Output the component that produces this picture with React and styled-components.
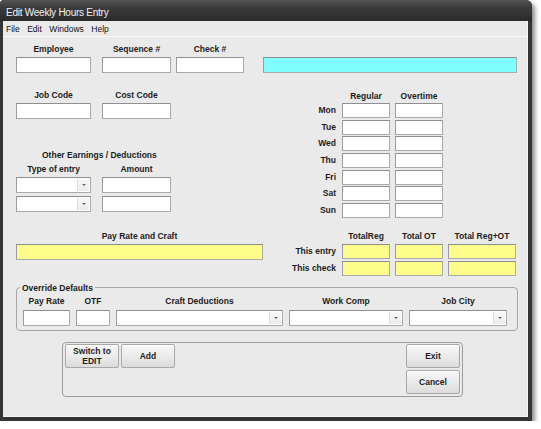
import React from "react";
import styled, { createGlobalStyle } from "styled-components";

const GlobalStyle = createGlobalStyle`
  html, body {
    margin: 0;
    padding: 0;
    background: #fff;
  }
  body {
    font-family: "Liberation Sans", Arial, sans-serif;
    color: #1c1c1c;
  }
`;

const Window = styled.div`
  width: 532px;
  height: 421px;
  display: flex;
  flex-direction: column;
  background: #353535;
  border-radius: 4px 6px 0 0;
  box-shadow: 3px 3px 4px rgba(0, 0, 0, 0.45);
`;

const TitleBar = styled.div`
  height: 21px;
  box-sizing: border-box;
  padding: 6px 0 0 6px;
  font-size: 10px;
  line-height: 13px;
  letter-spacing: -0.25px;
  color: #f2f2f2;
  background: linear-gradient(#555 0%, #3c3c3c 35%, #2a2a2a 100%);
  border-radius: 4px 6px 0 0;
`;

const Frame = styled.div`
  flex: 1;
  display: flex;
  flex-direction: column;
  margin: 0 4px 4px 3px;
  background: #eaeaea;
  border-right: 1px solid #f8f8f8;
  border-bottom: 1px solid #f8f8f8;
`;

const MenuBar = styled.div`
  height: 15px;
  display: flex;
  align-items: center;
  gap: 7.5px;
  padding-left: 3px;
  font-size: 8.5px;
  color: #111;
  border-bottom: 1px solid #fbfbfb;
`;

const Client = styled.div`
  flex: 1;
  display: flex;
  flex-direction: column;
  padding: 7px 0 0 13px;
`;

const Row = styled.div`
  display: flex;
  align-items: ${(p) => p.$align || "flex-start"};
  margin-top: ${(p) => p.$mt || 0}px;
`;

const Column = styled.div`
  display: flex;
  flex-direction: column;
  width: ${(p) => p.$w}px;
`;

const Field = styled.div`
  display: flex;
  flex-direction: column;
  align-items: center;
  gap: ${(p) => p.$gap || 3}px;
  width: ${(p) => p.$w}px;
  margin-left: ${(p) => p.$ml || 0}px;
`;

const Label = styled.div`
  font-size: 8.5px;
  font-weight: bold;
  line-height: 10px;
  height: 10px;
  white-space: nowrap;
  text-align: ${(p) => p.$align || "center"};
  padding-left: ${(p) => p.$pl || 0}px;
  margin-top: ${(p) => p.$mt || 0}px;
`;

const Input = styled.div`
  width: ${(p) => (p.$w ? `${p.$w}px` : "100%")};
  height: ${(p) => p.$h || 16}px;
  margin-left: ${(p) => p.$ml || 0}px;
  box-sizing: border-box;
  background: ${(p) => p.$bg || "#fff"};
  border: 1px solid #ababab;
  border-top-color: #8f8f8f;
  border-left-color: #9c9c9c;
`;

const Combo = styled(Input)`
  display: flex;
  justify-content: flex-end;
  padding: 1px;
`;

const DropButton = styled.div`
  width: 11px;
  display: flex;
  align-items: center;
  justify-content: center;
  background: linear-gradient(#f7f7f7, #ececec);
  border-left: 1px solid #dedede;

  &::after {
    content: "";
    border-left: 2px solid transparent;
    border-right: 2px solid transparent;
    border-top: 2px solid #666;
  }
`;

const DayGrid = styled.div`
  display: grid;
  grid-template-columns: 57px 48px 48px;
  grid-template-rows: 13px repeat(7, 16.667px);
  column-gap: 5px;
  margin-left: ${(p) => p.$ml}px;
`;

const TotalsGrid = styled.div`
  display: grid;
  grid-template-columns: 57px 48px 48px 68px;
  grid-template-rows: 11px 15px 15px;
  column-gap: 5px;
  row-gap: 2px;
  margin-left: ${(p) => p.$ml}px;
`;

const HeadCell = styled.div`
  font-size: 8.5px;
  font-weight: bold;
  line-height: 10px;
  text-align: center;
  white-space: nowrap;
  align-self: ${(p) => p.$self || "start"};
  margin-bottom: ${(p) => p.$mb || 0}px;
`;

const RowLabel = styled.div`
  font-size: 8.5px;
  font-weight: bold;
  line-height: 15px;
  height: 15px;
  text-align: right;
  white-space: nowrap;
  padding-right: 1px;
`;

const Group = styled.fieldset`
  width: 502px;
  box-sizing: border-box;
  margin: 7px 0 0 0;
  padding: 3px 9px 4px 6px;
  border: 1px solid #a6a6a6;
  border-radius: 4px;
  display: flex;
`;

const Legend = styled.legend`
  font-size: 8.5px;
  font-weight: bold;
  line-height: 10px;
  padding: 0 2px;
  margin-left: -3px;
`;

const ButtonPanel = styled.div`
  width: 401px;
  height: 55px;
  box-sizing: border-box;
  margin: 11px 0 0 46px;
  padding: 1px 2px;
  border: 1px solid #9c9c9c;
  border-radius: 4px;
  display: flex;
  justify-content: space-between;
  align-items: flex-start;
`;

const ButtonSet = styled.div`
  display: flex;
  flex-direction: ${(p) => (p.$stack ? "column" : "row")};
  gap: 2px;
`;

const Button = styled.div`
  width: 54px;
  height: 24px;
  box-sizing: border-box;
  display: flex;
  align-items: center;
  justify-content: center;
  text-align: center;
  font-size: 8.5px;
  font-weight: bold;
  line-height: 10px;
  color: #1e1e1e;
  border: 1px solid #a8a8a8;
  border-radius: 2px;
  background: linear-gradient(#f8f8f8 0%, #ebebeb 50%, #dcdcdc 100%);
  box-shadow: inset 0 1px 0 #fff;
`;

const days = ["Mon", "Tue", "Wed", "Thu", "Fri", "Sat", "Sun"];

const ComboBox = ({ w }) => (
  <Combo $w={w}>
    <DropButton />
  </Combo>
);

export default function App() {
  return (
    <>
      <GlobalStyle />
      <Window>
        <TitleBar>Edit Weekly Hours Entry</TitleBar>
        <Frame>
          <MenuBar>
            <span>File</span>
            <span>Edit</span>
            <span>Windows</span>
            <span>Help</span>
          </MenuBar>
          <Client>
            <Row $align="flex-end">
              <Field $w={75}>
                <Label>Employee</Label>
                <Input />
              </Field>
              <Field $w={69} $ml={11}>
                <Label>Sequence #</Label>
                <Input />
              </Field>
              <Field $w={68} $ml={5}>
                <Label>Check #</Label>
                <Input />
              </Field>
              <Input $w={254} $ml={19} $bg="#80ffff" />
            </Row>

            <Row $mt={17}>
              <Column $w={155}>
                <Row>
                  <Field $w={75}>
                    <Label>Job Code</Label>
                    <Input />
                  </Field>
                  <Field $w={69} $ml={11}>
                    <Label>Cost Code</Label>
                    <Input />
                  </Field>
                </Row>
                <Label $align="left" $pl={26} $mt={31}>
                  Other Earnings / Deductions
                </Label>
                <Row $mt={4}>
                  <Field $w={75}>
                    <Label>Type of entry</Label>
                    <ComboBox />
                    <ComboBox />
                  </Field>
                  <Field $w={69} $ml={11}>
                    <Label>Amount</Label>
                    <Input />
                    <Input />
                  </Field>
                </Row>
              </Column>

              <DayGrid $ml={109}>
                <span />
                <HeadCell $self="end" $mb={2}>Regular</HeadCell>
                <HeadCell $self="end" $mb={2}>Overtime</HeadCell>
                {days.map((d) => (
                  <React.Fragment key={d}>
                    <RowLabel>{d}</RowLabel>
                    <Input $h={15} />
                    <Input $h={15} />
                  </React.Fragment>
                ))}
              </DayGrid>
            </Row>

            <Row $mt={11}>
              <Field $w={247}>
                <Label>Pay Rate and Craft</Label>
                <Input $bg="#fdfd8c" />
              </Field>
              <TotalsGrid $ml={17}>
                <span />
                <HeadCell>TotalReg</HeadCell>
                <HeadCell>Total OT</HeadCell>
                <HeadCell>Total Reg+OT</HeadCell>
                <RowLabel>This entry</RowLabel>
                <Input $h={15} $bg="#fdfd8c" />
                <Input $h={15} $bg="#fdfd8c" />
                <Input $h={15} $bg="#fdfd8c" />
                <RowLabel>This check</RowLabel>
                <Input $h={15} $bg="#fdfd8c" />
                <Input $h={15} $bg="#fdfd8c" />
                <Input $h={15} $bg="#fdfd8c" />
              </TotalsGrid>
            </Row>

            <Group>
              <Legend>Override Defaults</Legend>
              <Field $w={47} $gap={4}>
                <Label>Pay Rate</Label>
                <Input />
              </Field>
              <Field $w={34} $ml={6} $gap={4}>
                <Label>OTF</Label>
                <Input />
              </Field>
              <Field $w={167} $ml={6} $gap={4}>
                <Label>Craft Deductions</Label>
                <ComboBox />
              </Field>
              <Field $w={114} $ml={6} $gap={4}>
                <Label>Work Comp</Label>
                <ComboBox />
              </Field>
              <Field $w={98} $ml={6} $gap={4}>
                <Label>Job City</Label>
                <ComboBox />
              </Field>
            </Group>

            <ButtonPanel>
              <ButtonSet>
                <Button>
                  Switch to
                  <br />
                  EDIT
                </Button>
                <Button>Add</Button>
              </ButtonSet>
              <ButtonSet $stack>
                <Button>Exit</Button>
                <Button>Cancel</Button>
              </ButtonSet>
            </ButtonPanel>
          </Client>
        </Frame>
      </Window>
    </>
  );
}
